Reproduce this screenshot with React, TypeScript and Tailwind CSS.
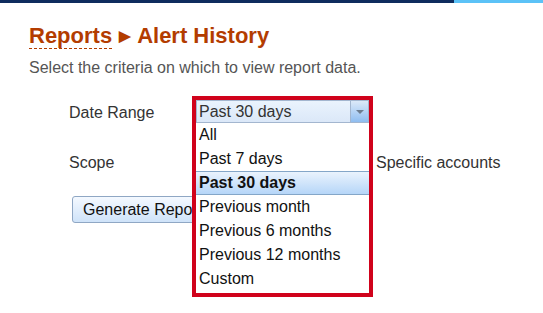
import * as React from "react";

const options = [
  "All",
  "Past 7 days",
  "Past 30 days",
  "Previous month",
  "Previous 6 months",
  "Previous 12 months",
  "Custom",
];

function DateDropdown() {
  const selected = "Past 30 days";
  return (
    <div className="absolute left-[192px] top-[96px] w-[181px] border-[4px] border-[#d0021b] bg-white pb-[2px]">
      <div className="flex h-[23px] items-stretch border border-[#a3b6cf] bg-gradient-to-b from-[#eaf3fd] to-[#dbe8f8]">
        <div className="flex-1 pl-[2px] text-[16px] leading-[21px] text-[#333]">{selected}</div>
        <div className="flex w-[18px] items-center justify-center border-l border-[#a3b6cf] bg-gradient-to-b from-[#dce9f8] to-[#8fbdf0]">
          <div className="h-0 w-0 border-x-[4px] border-t-[4px] border-x-transparent border-t-[#6d7d90]" />
        </div>
      </div>
      <ul>
        {options.map((o) =>
          o === selected ? (
            <li
              key={o}
              className="h-[24px] border-y border-[#84a6c8] bg-gradient-to-b from-[#eaf3fd] to-[#b6d6f8] pl-[3px] text-[16px] font-bold leading-[22px] text-[#111]"
            >
              {o}
            </li>
          ) : (
            <li key={o} className="h-[24px] pl-[3px] text-[16px] leading-[24px] text-[#111]">
              {o}
            </li>
          )
        )}
      </ul>
    </div>
  );
}

export default function App() {
  return (
    <div className="relative h-[313px] w-[543px] overflow-hidden bg-white font-['Liberation_Sans',Arial,sans-serif]">
      <div className="flex h-[3px]">
        <div className="w-[454px] bg-[#0e2c5e]" />
        <div className="flex-1 bg-[#5bc2f7]" />
      </div>

      <div className="pl-[29px] pt-[19px]">
        <h1 className="flex items-center text-[22px] font-bold leading-[28px] text-[#b33c00]">
          <span className="border-b border-dashed border-[#b33c00] leading-[25px]">Reports</span>
          <span className="ml-[7px] mr-[6px] text-[15px] leading-[28px]">▶</span>
          <span>Alert History</span>
        </h1>
        <p className="mt-[9px] text-[16px] leading-[18px] text-[#555]">
          Select the criteria on which to view report data.
        </p>

        <div className="ml-[40px] mt-[24px] flex h-[24px] items-center text-[16px] text-[#333]">
          <span>Date Range</span>
        </div>
        <div className="ml-[40px] mt-[26px] flex h-[24px] items-center text-[16px] text-[#333]">
          <span className="w-[307px]">Scope</span>
          <span>Specific accounts</span>
        </div>
        <div className="ml-[43px] mt-[21px]">
          <button className="h-[27px] rounded-[3px] border border-[#8fa7c4] bg-gradient-to-b from-[#f4f9ff] to-[#cfe3f9] px-[10px] text-[16px] text-[#111]">
            Generate Report
          </button>
        </div>
      </div>

      <DateDropdown />
    </div>
  );
}
